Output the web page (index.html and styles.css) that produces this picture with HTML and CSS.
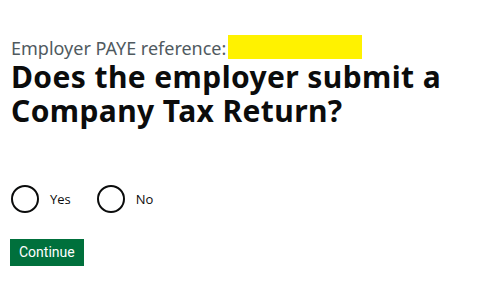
FILE: index.html
```html
<!DOCTYPE html>
<html lang="en">
<head>
<meta charset="utf-8">
<title>Company Tax Return</title>
<link rel="stylesheet" href="styles.css">
</head>
<body>
<main class="page">
  <form class="form">
    <fieldset class="fieldset">
      <legend class="legend">
        <span class="caption">Employer PAYE reference:<span class="redact"></span></span>
        <h1 class="heading">Does the employer submit a Company Tax Return?</h1>
      </legend>
      <div class="radios">
        <label class="radio"><input type="radio" name="ctr" value="yes"><span class="circle"></span><span class="label">Yes</span></label>
        <label class="radio"><input type="radio" name="ctr" value="no"><span class="circle"></span><span class="label">No</span></label>
      </div>
    </fieldset>
    <button type="submit" class="button">Continue</button>
  </form>
</main>
</body>
</html>
```
FILE: styles.css
```css
html, body {
  margin: 0;
  padding: 0;
  background: #ffffff;
}
.page {
  padding: 37px 10px 0 11px;
}
.form {
  margin: 0;
}
.fieldset {
  margin: 0;
  padding: 0;
  border: 0;
}
.legend {
  padding: 0;
}
.caption {
  display: flex;
  align-items: flex-start;
  font-family: "Noto Sans", sans-serif;
  font-size: 18px;
  line-height: 22px;
  color: #505a5f;
}
.redact {
  display: inline-block;
  width: 134px;
  height: 24px;
  margin-left: 2px;
  margin-top: -2px;
  background: #fff200;
}
.heading {
  margin: 1px 0 0;
  font-family: "Noto Sans", sans-serif;
  font-weight: 700;
  font-size: 30px;
  line-height: 34px;
  color: #0b0c0c;
  letter-spacing: 0.4px;
}
.radios {
  display: flex;
  margin-top: 57px;
}
.radio {
  display: flex;
  align-items: center;
  margin-right: 26px;
  cursor: pointer;
}
.radio input {
  position: absolute;
  opacity: 0;
  width: 0;
  height: 0;
}
.circle {
  width: 24px;
  height: 24px;
  border: 2px solid #0b0c0c;
  border-radius: 50%;
}
.label {
  font-family: "Open Sans", sans-serif;
  font-size: 13px;
  color: #0b0c0c;
  margin-left: 11px;
}
.button {
  margin-top: 26px;
  margin-left: -1px;
  display: inline-block;
  padding: 3px 9px 3px;
  background: #00703c;
  color: #ffffff;
  border: 0;
  border-radius: 0;
  box-shadow: 0 2px 0 #002d18;
  font-family: Roboto, sans-serif;
  font-size: 14px;
  line-height: 21px;
  cursor: pointer;
}
```
